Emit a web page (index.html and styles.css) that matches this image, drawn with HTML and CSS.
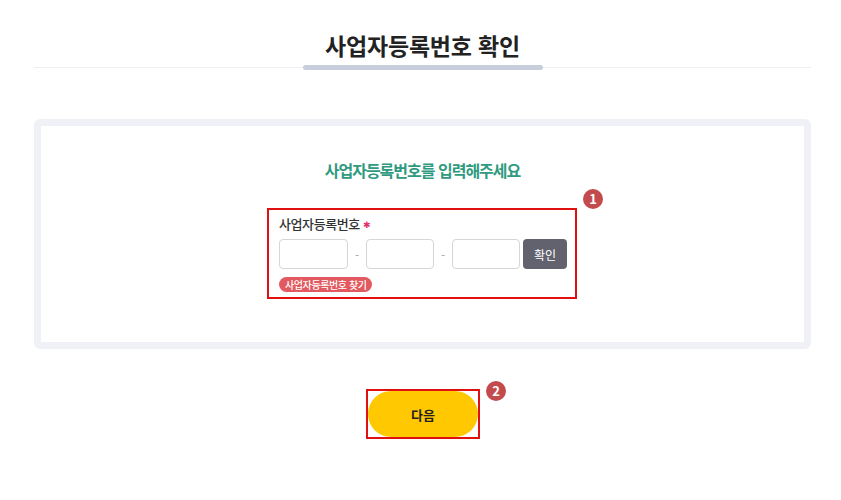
FILE: index.html
```html
<!DOCTYPE html>
<html lang="ko">
<head>
<meta charset="utf-8">
<link rel="stylesheet" href="styles.css">
</head>
<body>
<div class="page">
  <header class="head">
    <h1 class="title">사업자등록번호 확인</h1>
    <div class="rule"><div class="rule-bar"></div></div>
  </header>

  <section class="card">
    <h2 class="subtitle">사업자등록번호를 입력해주세요</h2>
    <div class="mark-wrap">
      <div class="field-box">
        <div class="label">사업자등록번호<span class="req">✱</span></div>
        <div class="inputs">
          <input class="num num-first" type="text">
          <span class="dash">-</span>
          <input class="num" type="text">
          <span class="dash">-</span>
          <input class="num" type="text">
          <button class="check">확인</button>
        </div>
        <span class="find">사업자등록번호 찾기</span>
      </div>
      <span class="step step-1">1</span>
    </div>
  </section>

  <div class="next-row">
    <div class="mark-wrap">
      <div class="next-box"><button class="next">다음</button></div>
      <span class="step step-2">2</span>
    </div>
  </div>
</div>
</body>
</html>
```

FILE: styles.css
```css
* { box-sizing: border-box; }
html, body { margin: 0; padding: 0; background: #fff; }
body {
  font-family: "Noto Sans CJK KR", "Noto Sans", sans-serif;
  color: #222;
}
.page {
  width: 777px;
  margin-left: 34px;
}
.head {
  padding-top: 30px;
}
.title {
  margin: 0;
  text-align: center;
  font-size: 23px;
  line-height: 30px;
  font-weight: 700;
  letter-spacing: -0.2px;
  color: #222;
}
.rule {
  margin-top: 7px;
  height: 1px;
  background: #eeeff2;
  display: flex;
  justify-content: center;
  align-items: center;
}
.rule-bar {
  flex-shrink: 0;
  width: 240px;
  height: 5px;
  border-radius: 3px;
  background: #c9cedd;
}
.card {
  margin-top: 51px;
  border: 7px solid #eff1f6;
  border-radius: 6px;
  padding: 34px 0 43px;
  display: flex;
  flex-direction: column;
  align-items: center;
}
.subtitle {
  margin: 0;
  font-size: 16px;
  line-height: 20px;
  font-weight: 700;
  letter-spacing: -1px;
  color: #2f9a7f;
}
.mark-wrap {
  position: relative;
}
.card .mark-wrap {
  margin-top: 28px;
  margin-left: -1px;
}
.field-box {
  width: 310px;
  border: 2px solid #e01010;
  padding: 5px 8px 4px 10px;
}
.label {
  font-size: 13px;
  line-height: 18px;
  font-weight: 500;
  letter-spacing: -0.4px;
  color: #333;
}
.req {
  color: #e0306a;
  margin-left: 3px;
  font-size: 9px;
  vertical-align: 1px;
}
.inputs {
  margin-top: 5px;
  display: flex;
  align-items: center;
}
.num {
  width: 68px;
  height: 30px;
  border: 1px solid #d6d6d9;
  border-radius: 4px;
  background: #fff;
  padding: 0;
  margin: 0;
}
.num-first { width: 69px; }
.dash {
  width: 18px;
  text-align: center;
  font-size: 12px;
  color: #aaa;
}
.check {
  margin-left: 3px;
  width: 44px;
  height: 30px;
  border: 0;
  border-radius: 4px;
  background: #62626e;
  color: #fff;
  font-family: inherit;
  font-size: 12px;
  padding: 0;
}
.find {
  display: inline-block;
  margin-top: 8px;
  height: 15px;
  line-height: 15px;
  padding: 0 5px 0 6px;
  border-radius: 8px;
  background: #e25a5f;
  color: #fff;
  font-size: 10px;
  font-weight: 500;
  letter-spacing: -0.4px;
  vertical-align: top;
}
.step {
  position: absolute;
  width: 20px;
  height: 20px;
  border-radius: 50%;
  background: #c34b4d;
  color: #fff;
  font-size: 13px;
  font-weight: 700;
  line-height: 20px;
  text-align: center;
}
.step-1 { right: -26px; top: -19px; }
.step-2 { right: -26px; top: -8px; }
.next-row {
  margin-top: 40px;
  display: flex;
  justify-content: center;
}
.next-box {
  margin-left: 1px;
  width: 114px;
  height: 50px;
  border: 2px solid #e01010;
}
.next {
  display: block;
  width: 100%;
  height: 100%;
  border: 0;
  border-radius: 23px;
  background: #ffc800;
  color: #222;
  font-family: inherit;
  font-size: 13px;
  font-weight: 700;
  padding: 0;
}
```
